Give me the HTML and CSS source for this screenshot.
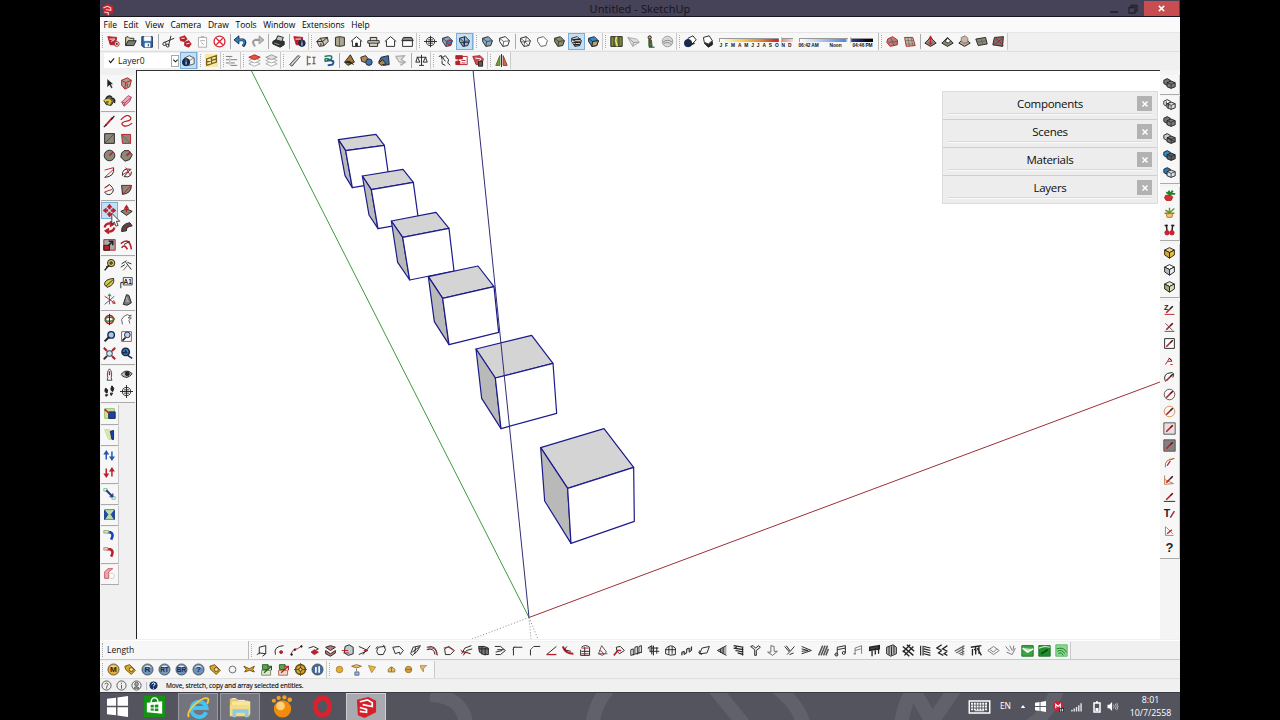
FILE: index.html
```html
<!DOCTYPE html>
<html lang="en">
<head>
<meta charset="utf-8">
<title>Untitled - SketchUp</title>
<link rel="stylesheet" href="styles.css">
</head>
<body>
<div class="screen">
  <header class="titlebar">
    <svg class="app-logo" viewBox="0 0 16 16"><path d="M2 4L9 1L15 4V12L8 15L3 13Z" fill="#c8232c"/><path d="M3 6L8 4L12 6V9L6 8M4 11L9 12V15" fill="none" stroke="#f5c9c9" stroke-width="1.4"/></svg>
    <span class="title">Untitled - SketchUp</span>
    <div class="window-buttons">
      <svg class="min" viewBox="0 0 10 10"><path d="M1 8H9" stroke="#1c1a28" stroke-width="1.4"/></svg>
      <svg class="max" viewBox="0 0 10 10"><path d="M1 3.5H7V9H1ZM3 3V1.5H9V7H7.500" fill="none" stroke="#24212f" stroke-width="1.300"/></svg>
      <span class="close"><svg viewBox="0 0 8 8"><path d="M1 1L7 7M7 1L1 7" stroke="#fff" stroke-width="1.700"/></svg></span>
    </div>
  </header>
  <nav class="menu"><span>File</span><span>Edit</span><span>View</span><span>Camera</span><span>Draw</span><span>Tools</span><span>Window</span><span>Extensions</span><span>Help</span></nav>
  <div class="bar bar-main">
    <div class="strip" data-icons="new open save | cut copy paste erase | undo redo | print | info"></div>
    <div class="strip" data-icons="iso topv front right back left"></div>
    <div class="strip" data-icons="section planeA *planeB"></div>
    <div class="strip" data-icons="xray backedge | wire hidden shaded *textured mono"></div>
    <div class="strip" data-icons="map terrain person earth"></div>
    <div class="strip" data-icons="shadowset shadow">
    </div>
    <div class="sliders">
      <div class="slider months"><i class="track"></i><b class="thumb"></b><div class="ticks"><span>J</span><span>F</span><span>M</span><span>A</span><span>M</span><span>J</span><span>J</span><span>A</span><span>S</span><span>O</span><span>N</span><span>D</span></div></div>
      <div class="slider hours"><i class="track"></i><b class="thumb"></b><div class="ticks"><span>06:42 AM</span><span>Noon</span><span>04:46 PM</span></div></div>
    </div>
    <div class="strip" data-icons="sandA sandB | smoove stamp drape detail flip"></div>
  </div>
  <div class="bar bar-layers">
    <div class="layer-select"><svg viewBox="0 0 8 8"><path d="M1 4L3 6.500L7 1.500" fill="none" stroke="#111" stroke-width="1.200"/></svg><span>Layer0</span><b><svg viewBox="0 0 8 8"><path d="M1.500 3L4 5.500L6.500 3" fill="none" stroke="#222" stroke-width="1.300"/></svg></b></div>
    <div class="strip bare" data-icons="*layerinfo"></div>
    <div class="strip g4" data-icons="fence"></div>
    <div class="strip g3" data-icons="outline"></div>
    <div class="strip" data-icons="stackR stackG"></div>
    <div class="strip" data-icons="beam frame swirl | solidA solidB solidC ghost | scale"></div>
    <div class="strip" data-icons="hook report redcube"></div>
    <div class="strip" data-icons="mirror"></div>
  </div>
  <main class="work">
    <aside class="palette">
      <div class="pair" data-icons="select component paint eraser"></div>
      <div class="pair" data-icons="pencil freehand rect rotrect circle polygon arc arc2 arc3 pie"></div>
      <div class="pair" data-icons="*move pushpull rotate follow scaler offset"></div>
      <div class="pair" data-icons="tape dim protractor text axes text3d"></div>
      <div class="pair" data-icons="orbit pan zoom zoomwin extents prev"></div>
      <div class="pair last" data-icons="position look walk sectionp"></div>
      <div class="single" data-icons="fxA"></div>
      <div class="single" data-icons="fxB"></div>
      <div class="single" data-icons="upB upR"></div>
      <div class="single" data-icons="diag"></div>
      <div class="single" data-icons="twist"></div>
      <div class="single" data-icons="bendB bendR"></div>
      <div class="single" data-icons="fold"></div>
    </aside>
    <section class="canvas">
      <svg class="scene" viewBox="137 71 1023 568">
        <g fill="none" stroke-width="1">
          <path d="M251 70L529 617.500" stroke="#3c9c3c"/>
          <path d="M529 617.500L1160 382" stroke="#9c3038"/>
          <path d="M529 617.500L472 639M529 617.500L538 639M529 617.500L531 639" stroke="#888" stroke-dasharray="1 2"/>
        </g>
        <g id="cubes" transform="translate(320 120) scale(.33333)" stroke="#1b1b8c" stroke-width="3.600" stroke-linejoin="round"></g>
        <path d="M473 70L529 617.500" stroke="#2e2e78" fill="none"/>
      </svg>
      <div class="trays">
        <div class="tray"><span>Components</span><b><svg viewBox="0 0 8 8"><path d="M1.500 1.500L6.500 6.500M6.500 1.500L1.500 6.500" stroke="#fff" stroke-width="1.500"/></svg></b></div>
        <div class="tray"><span>Scenes</span><b><svg viewBox="0 0 8 8"><path d="M1.500 1.500L6.500 6.500M6.500 1.500L1.500 6.500" stroke="#fff" stroke-width="1.500"/></svg></b></div>
        <div class="tray"><span>Materials</span><b><svg viewBox="0 0 8 8"><path d="M1.500 1.500L6.500 6.500M6.500 1.500L1.500 6.500" stroke="#fff" stroke-width="1.500"/></svg></b></div>
        <div class="tray"><span>Layers</span><b><svg viewBox="0 0 8 8"><path d="M1.500 1.500L6.500 6.500M6.500 1.500L1.500 6.500" stroke="#fff" stroke-width="1.500"/></svg></b></div>
      </div>
    </section>
    <aside class="rail">
      <div class="single" data-icons="solid"></div>
      <div class="single" data-icons="solidW solid solidX solidP solidQ"></div>
      <div class="single" data-icons="berry sprout cherry"></div>
      <div class="single" data-icons="cubeY cubeW cubeG"></div>
      <div class="single" data-icons="zpen crosspen boxpen smallpen arcpen circpen circpenO sqpen sqpenG bowpen tripen basepen tpen trioO question"></div>
    </aside>
    <svg class="pointer" viewBox="0 0 12 18"><path d="M1 1V14L4 11.500L6 16.500L8.500 15.500L6.500 10.500H10.500Z" fill="#fff" stroke="#222"/></svg>
  </main>
  <div class="bar bar-length">
    <div class="length">Length</div>
    <div class="strip" data-icons="b1 b2 b3 b4 b5 b6 b7 b8 b9 b10 b11 b12 b13 b14 b15 b16 b17 b18 b19 b20 b21 b22 b23 b24 b25 b26 b27 b28 b29 b30 b31 b32 b33 b34 b35 b36 b37 b38 b39 b40 b41 b42 b43 b44 b45 b46 b47 b48"></div>
  </div>
  <div class="bar bar-render">
    <div class="strip" data-icons="ballM tag ballR ballRT ballBR ballQ tag ring bow export exportR gear ballII"></div>
    <div class="strip wide" data-icons="sphere plane spot dome sphere2 spot2"></div>
  </div>
  <footer class="status">
    <svg viewBox="0 0 12 12"><circle cx="6" cy="6" r="5"/><path d="M4 4.500Q6 2 8 4.500Q6 6 6 9.500"/></svg>
    <svg viewBox="0 0 12 12"><circle cx="6" cy="6" r="5"/><path d="M6 3V4.500M6 5.500V9.500"/></svg>
    <svg viewBox="0 0 12 12"><circle cx="6" cy="6" r="5"/><path d="M4 4.500A2 2 0 1 1 8 4.500A2 2 0 1 1 4 4.500M3 9Q6 5.500 9 9Z" fill="#aaa"/></svg>
    <i></i>
    <svg class="help" viewBox="0 0 12 12"><circle cx="6" cy="6" r="5"/><path d="M4 4.500Q6 1.500 8 4.500Q6 5.500 6 7M6 8.500V9.500"/></svg>
    <span>Move, stretch, copy and array selected entities.</span>
  </footer>
  <div class="taskbar">
    <svg class="wall" viewBox="0 0 1080 28" preserveAspectRatio="none"><g fill="none" stroke="#fff" stroke-opacity=".08" stroke-width="14"><path d="M330 2Q368 4 366 40M508 -4Q494 12 492 36M612 -8L645 34M676 -6Q702 14 705 40M800 40Q803 10 815 -6M812 -6L832 30L856 -6M930 34Q950 20 958 -6"/></g></svg>
    <div class="app"><svg viewBox="0 0 24 24"><path d="M1 4L10.500 2.800V11.300H1ZM12 2.600L23 1V11.300H12ZM1 12.700H10.500V21.200L1 20ZM12 12.700H23V23L12 21.400Z" fill="#fff"/></svg></div>
    <div class="app store"><svg viewBox="0 0 24 24"><path d="M1 1H23V23H1Z" fill="#129312"/><path d="M4 8L20 6.500V19.500L4 18Z" fill="#fff"/><path d="M8.500 8Q8.500 3 12 3T15.500 7" fill="none" stroke="#fff" stroke-width="1.500"/><path d="M8 10.500L11.200 10.200V13H8ZM12.300 10.100L16 9.800V13H12.300ZM8 14H11.200V16.500L8 16.200ZM12.300 14H16V17L12.300 16.600Z" fill="#129312"/></svg></div>
    <div class="app open"><svg viewBox="0 0 24 24"><path d="M20 17A8 8 0 1 1 20.500 12.500H6" fill="none" stroke="#48c2ef" stroke-width="4"/><path d="M2 22Q-1 17 9 8Q19 0 22 3Q23 5 21 8" fill="none" stroke="#f2cb43" stroke-width="2"/></svg></div>
    <div class="app open"><svg viewBox="0 0 26 24"><path d="M1 2H9L11 4H22V21H1Z" fill="#e8c766"/><path d="M3 5H24V20H3Z" fill="#f9e79a"/><path d="M1 9H23V22H1Z" fill="#f4da80"/><path d="M4 23V14H22V23H18V18H8V23Z" fill="#8bcbe8"/><path d="M3 2H8M10 4H18" stroke="#fff"/></svg></div>
    <div class="app"><svg viewBox="0 0 24 24"><circle cx="12" cy="14.500" r="9" fill="#f28c0c"/><circle cx="10" cy="11.500" r="4.500" fill="#ffd27a"/><g fill="#f3a21c"><circle cx="3" cy="6" r="2.200"/><circle cx="8" cy="3" r="2.200"/><circle cx="14" cy="2.500" r="2.200"/><circle cx="19.500" cy="5" r="2.400"/></g></svg></div>
    <div class="app opera"><svg viewBox="0 0 24 24"><ellipse cx="12" cy="12" rx="7.500" ry="9" fill="none" stroke="#d8232e" stroke-width="5"/></svg></div>
    <div class="app open active"><svg viewBox="0 0 24 24"><path d="M2 4L14 1L22 5V17L10 23L3 20Z" fill="#d61f2a"/><path d="M5 6L13 4L18 7V11L8 9M5 12L12 14V17L5 16" fill="none" stroke="#fff" stroke-width="1.800"/></svg></div>
    <div class="tray-area">
      <svg class="kbd" viewBox="0 0 24 15"><path d="M1 1H23V14H1Z" fill="none" stroke="#fff" stroke-width="1.500"/><path d="M3 4H21M3 7H21M3 10H21" stroke="#fff" stroke-width="2" stroke-dasharray="2 1"/><path d="M7 11.500H17" stroke="#fff"/></svg>
      <span class="lang">EN</span>
      <svg class="up" viewBox="0 0 6 4"><path d="M0 4L3 0L6 4Z" fill="#fff"/></svg>
      <svg class="win" viewBox="0 0 12 12"><path d="M0 2L5 1V5.500H0ZM6 1L12 0V5.500H6ZM0 6.500H5V11L0 10ZM6 6.500H12V12L6 11Z" fill="#fff"/></svg>
      <svg class="mega" viewBox="0 0 12 12"><circle cx="5.500" cy="5.500" r="5.500" fill="#d41e34"/><path d="M3 8V3.500L5.500 6L8 3.500V8" fill="none" stroke="#fff" stroke-width="1.200"/><path d="M7 7.500H12V12H7Z" fill="#222"/><path d="M8.500 8.500V11.500M10.500 8.500V11.500" stroke="#fff"/></svg>
      <svg class="net" viewBox="0 0 12 10"><path d="M1 10V8M3.500 10V6.500M6 10V5M8.500 10V3M11 10V1" stroke="#e8e8ee" stroke-width="1.500"/></svg>
      <svg class="bat" viewBox="0 0 8 12"><path d="M1 2H7V11H1ZM3 1H5" fill="none" stroke="#fff" stroke-width="1.500"/><path d="M2.500 7H5.500V10H2.500Z" fill="#fff"/></svg>
      <svg class="vol" viewBox="0 0 12 12"><path d="M0 4H2L5 1V11L2 8H0Z" fill="#fff"/><path d="M6.500 4Q8 6 6.500 8M8.500 3Q10.500 6 8.500 9M10.200 2Q12.500 6 10.200 10" fill="none" stroke="#ddd" stroke-width=".8"/></svg>
      <div class="clock"><span>8:01</span><span>10/7/2558</span></div>
    </div>
  </div>
</div>
<script src="app.js"></script>
</body>
</html>
```

FILE: styles.css
```css
body { margin: 0; background: #000; font-family: "Open Sans", "Noto Sans", sans-serif; color: #161616; overflow: hidden; }
svg { display: block; }
.screen { width: 1080px; height: 720px; margin: 0 auto; background: #f0f0f0; display: flex; flex-direction: column; overflow: hidden; }

.titlebar { height: 17px; background: #464257; border-bottom: 1px solid #17151f; box-sizing: border-box; display: grid; grid-template-columns: 80px 1fr 80px; align-items: center; flex: none; }
.app-logo { width: 13px; height: 13px; margin-left: 1px; }
.title { text-align: center; font-size: 11px; line-height: 18px; color: #15131d; letter-spacing: .1px; }
.window-buttons { display: flex; align-items: center; justify-content: flex-end; height: 16px; }
.min, .max { width: 10px; height: 10px; margin-right: 10px; }
.min { margin-right: 9px; }
.max { margin-right: 6px; }
.close { width: 35px; height: 15px; align-self: flex-start; background: #c74d50; display: grid; place-items: center; margin-right: 1px; }
.close svg { width: 7px; height: 7px; }

.menu { height: 15px; background: #fafafa; display: flex; gap: 6.600px; padding-left: 3.500px; font-size: 8.500px; line-height: 15px; flex: none; }
.menu span { white-space: nowrap; color: #000; }

.bar { display: flex; align-items: center; flex: none; }
.bar-main { height: 19px; box-shadow: inset 0 1px #e6e6e6; }
.bar-layers { height: 19px; box-shadow: inset 0 1px #dedede; }
.strip { display: flex; height: 17px; background: #f7f7f7; padding-left: 5px; border-right: 1px solid #c9c9c9; position: relative; }
.strip::before, .length::before { content: ""; position: absolute; left: 2px; top: 2px; bottom: 2px; border-left: 1px dotted #aaa; }
.strip:first-child { padding-left: 4.500px; }
.strip.bare { padding-left: 0; }
.strip.bare::before { display: none; }
.strip.g4 { padding-left: 5px; }
.strip.g3 { padding-left: 2px; }
.cell { width: 17px; height: 17px; display: grid; place-items: center; box-sizing: border-box; flex: none; }
.cell svg { width: 13px; height: 13px; }
.cell.on { background: #c5dff5; outline: 1px solid #79aeda; outline-offset: -1px; }
.gap { width: 1px; margin: 1px 1px 1px 2px; background: #aaa; flex: none; }

.sliders { height: 17px; background: #f7f7f7; display: flex; gap: 6px; padding: 0 5px 0 3px; border-right: 1px solid #bbb; }
.bar-main .strip:nth-child(6) { border-right: 0; }
.slider { width: 74px; position: relative; padding-top: 5px; }
.track { display: block; height: 3px; border: 1px solid #999; border-right: 0; border-bottom: 0; }
.months .track { background: linear-gradient(90deg, #fff 0, #f3d55c 28%, #e08b36 55%, #cf2328 78%, #d98 86%, #f2dada 100%); }
.hours .track { background: linear-gradient(90deg, #fff 0, #5686d4 62%, #fff 66%, #223a92 72%, #080812 92%); }
.thumb { position: absolute; top: 4px; width: 2px; height: 6px; background: #fff; border-right: 1px solid #bbb; }
.months .thumb { left: 60px; }
.hours .thumb { left: 49px; }
.ticks { display: flex; justify-content: space-between; font: bold 4.800px/6px "Liberation Sans", sans-serif; padding: 1px 1px 0; color: #111; }
.hours .ticks { letter-spacing: -.1px; padding: 1px 0 0; }

.layer-select { width: 75px; height: 15px; margin: 0 1px 0 4px; background: #fff; display: flex; align-items: center; font-size: 8.500px; }
.layer-select svg { width: 7px; height: 7px; margin: 0 3px 0 4px; }
.layer-select b { width: 8px; height: 12px; border: 1px solid #aaa; box-sizing: border-box; margin-left: auto; display: grid; place-items: center; }
.layer-select b svg { width: 7px; margin: 0; }

.work { height: 569px; display: flex; position: relative; flex: none; }
.palette { width: 36px; padding-top: 5px; box-sizing: border-box; background: #f0f0f0; }
.pair { display: grid; grid-template-columns: 17px 17px; width: 34px; margin-left: .5px; background: #f7f7f7; padding-bottom: 2px; border-bottom: 1px solid #aaa; margin-bottom: 1px; }
.pair.last { margin-bottom: 2px; }
.pair:nth-child(4) { margin-bottom: 0; }
.single { width: 17px; margin-left: .5px; background: #f7f7f7; padding-bottom: 2px; border-bottom: 1px solid #aaa; border-right: 1px solid #c6c6c6; margin-bottom: 1px; }
.canvas { width: 1023px; background: #fff; border-left: 1px solid #222; border-top: 1px solid #333; position: relative; height: 568px; }
.scene { width: 1023px; height: 568px; }
.trays { position: absolute; top: 20px; right: 2px; width: 214px; border: 1px solid #dcdcdc; background: #ededed; }
.tray { height: 28px; box-sizing: border-box; position: relative; border-bottom: 1px solid #cfcfcf; text-align: center; font-size: 11.500px; letter-spacing: -.3px; line-height: 23px; color: #0c0c0c; }
.tray:last-child { border-bottom: 0; height: 27px; }
.tray::after { content: ""; position: absolute; left: 5px; right: 5px; bottom: 4px; height: 1px; background: #d9d9d9; border-bottom: 1px solid #fafafa; }
.tray b { position: absolute; right: 5px; top: 4px; width: 15px; height: 15px; background: #b2b2b2; display: grid; place-items: center; }
.tray b svg { width: 8px; height: 8px; }
.rail { width: 20px; background: #f4f4f4; padding-top: 4.500px; box-sizing: border-box; }
.rail .single { width: 18px; padding-bottom: 2px; margin-bottom: 3px; margin-left: 0; padding-left: 1px; }
.rail .single:first-child { margin-bottom: 1px; }
.pointer { position: absolute; left: 11px; top: 142px; width: 10px; height: 16px; }

.bar-length { height: 20px; margin-top: 1px; border-bottom: 1px solid #c8c8c8; border-top: 1px solid #fff; box-sizing: border-box; }
.length { width: 141px; height: 18px; padding-left: 7px; font-size: 8.500px; line-height: 18px; position: relative; border-right: 1px solid #bbb; background: #f7f7f7; }
.bar-length .strip { padding-left: 4.500px; }
.bar-render { height: 18px; }
.bar-render .strip:first-child { padding-left: 5px; }
.strip.wide { padding-left: 4px; padding-right: 2px; }
.strip.wide .cell:nth-child(3) { margin-right: 2px; margin-left: -1px; }
.strip.wide .cell:last-child { margin-left: -2px; }

.status { height: 14px; display: flex; align-items: center; padding-left: 1px; gap: 4px; font-size: 6.600px; letter-spacing: -.14px; border-top: 1px solid #ddd; box-sizing: border-box; flex: none; white-space: nowrap; }
.status svg { width: 11px; height: 11px; fill: none; stroke: #555; stroke-width: 1; }
.status i { width: 1px; height: 8px; background: #bbb; margin-right: -3px; }
.status .help { fill: #173466; stroke: #fff; }
.status span { margin-left: 3px; color: #000; -webkit-text-stroke: .1px #000; }

.taskbar { height: 28px; background: #54545f; display: flex; position: relative; border-top: 1px solid #3c3c46; box-sizing: border-box; flex: none; gap: 2px; }
.wall { position: absolute; left: 0; top: 0; width: 1080px; height: 27px; }
.app { width: 40px; height: 27px; box-sizing: border-box; display: grid; place-items: center; position: relative; flex: none; }
.app:nth-of-type(1) { width: 34px; }
.app.store, .app.opera { padding-right: 3px; }
.app svg { width: 23px; height: 23px; }
.app.open { border: 1px solid #9a9aa4; background: #73747e; border-bottom: 0; }
.app.active { background: #a9a9b0; border-color: #cfcfd6; }
.tray-area { margin-left: auto; display: flex; align-items: center; position: relative; color: #fff; padding-right: 8px; }
.kbd { width: 23px; height: 14px; margin-right: 9px; }
.lang { font-size: 8.500px; margin-right: 9px; margin-top: -2px; }
.up { width: 6px; height: 3px; margin-right: 9px; }
.win { width: 11px; height: 11px; margin-right: 7px; }
.mega { width: 11px; height: 11px; margin-right: 7px; }
.net { width: 11px; height: 10px; margin-right: 11px; }
.bat { width: 8px; height: 12px; margin-right: 6px; }
.vol { width: 12px; height: 11px; margin-right: 10px; }
.clock { display: flex; flex-direction: column; align-items: center; font-size: 8.800px; line-height: 13px; width: 43px; white-space: nowrap; }
```

FILE: app.js
```js
const K = '#222', R = '#b5202a', G = '#8b8878', B = '#2a7fb8', N = '#172a50', W = '#fff', Y = '#d8a826';

// Shape helpers draw on a 16 x 16 grid: geometry, stroke, fill, stroke width.
const p = (d, s = K, f = 'none', w = 1.15) => `<path d="${d}" stroke="${s}" fill="${f}" stroke-width="${w}"/>`;
const c = (x, y, r, s = K, f = 'none', w = 1.15) => `<circle cx="${x}" cy="${y}" r="${r}" stroke="${s}" fill="${f}" stroke-width="${w}"/>`;
const t = (x, y, size, s, f = K) => `<text x="${x}" y="${y}" font-size="${size}" font-weight="bold" font-family="Liberation Sans" text-anchor="middle" fill="${f}">${s}</text>`;

const tilt = (f, s = K) => p('M2 4L9 2L14 7L12 13L6 14L2 8Z', s, f) + p('M2 4L7 8L14 7M7 8L6 14', s, 'none', .8);
const cube = (a, b, d, s = K) => p('M2 5L8 2L14 5L8 8Z', s, a) + p('M2 5L8 8V15L2 11Z', s, b) + p('M14 5L8 8V15L14 11Z', s, d);
const pair = (a, b, s = K) => p('M1 4L5 2L9 4V9L4 10L1 8Z', s, a) + p('M5 7L10 5L15 7V12L10 14L5 12Z', s, b) + p('M5 7L10 9L15 7M10 9V14', s, 'none', .9);
const house = f => p('M1 8L8 2L15 8M3 7V14H13V7', K, f) + p('M7 14V10H9V14', K, K);
const pen = (col = R) => p('M4 12L12 4', col, 'none', 2) + p('M9 7L12 4', K, 'none', 1.300);
const hatch = 'M2 14L7 2M5 14L10 2M8 14L13 2M11 14L14 6';
const ball = (col, dark, s, tc) => c(8, 8, 6.800, '#444', col, 1) + p('M3 6Q8 0 13 6Q8 4 3 6Z', 'none', dark) + t(8, 11.300, s.length > 1 ? 8 : 10, s, tc);
const mound = 'M1 10L8 3L15 10L8 14Z';

const icons = {
  new: p('M1 2L12 3L10 12H4Z', R, R) + p('M3 5H10M5 8L9 6', W) + c(12, 11, 3, R, W) + p('M10.500 11H13.500M12 9.500V12.500'),
  open: p('M2 13V3L5 2L7 4H12V7', K, '#d9d4b0') + p('M2 13L5 7H15L12 13Z', K, '#777b70'),
  save: p('M1 2H14V15H3L1 13Z', N, '#286db0') + p('M4 2H12V7H4ZM5 15V10H11V15', W, W, .8) + p('M9 11V14', N),
  cut: p('M3 9L15 4M11 1L8 13', K) + c(3, 11, 2) + c(7, 13, 1.800),
  copy: p('M1 3L7 1L10 5L7 8L2 7Z', R, R) + p('M7 9L12 7L15 11L12 15L7 13Z', R, R) + p('M3 4L7 4M9 11L13 10', W),
  paste: p('M3 3H13V15H3ZM6 2H10M5 7H11M6 9L10 12', '#aaa', W),
  erase: c(8, 8, 6.700, '#d72533', W, 1.600) + p('M4 4L12 12M12 4L4 12', '#d72533', 'none', 1.600),
  undo: p('M4 6H11Q16 8 11 14', N, 'none', 3.500) + p('M0 6L6 1V11Z', N, B) + p('M4 6H11Q15 8 11 13', B, 'none', 2),
  redo: p('M12 6H5Q0 8 5 14', '#999', 'none', 2.500) + p('M16 6L10 1V11Z', '#999', '#bbb'),
  print: p('M1 8L6 5L15 8V12L10 15L1 11Z', K, '#333') + p('M5 6L7 1L14 3L12 8Z', K, '#b9c8cc') + p('M3 10L9 12', '#999'),
  info: p('M1 2L12 3L10 12H4Z', R, R) + p('M3 5H10', W) + c(11, 10, 4, N, N) + p('M11 9V13M11 7V8', W),
  iso: p('M1 8L5 4L14 3L15 8L10 13L4 14Z', K, '#ccc8b5') + p('M1 8L8 8L14 3M8 8L10 13M5 4L8 8M6 10V13', K),
  topv: p('M3 3L8 2L14 3V13L8 14L3 13Z', K, '#aaa68f') + p('M8 2V14', '#555', 'none', 1),
  front: house(W), right: p('M1 7H15V10H1ZM4 7V3H12V7M3 10V14H13V10', K, '#d9d6c6'), back: p('M1 8L8 2L15 8M3 7V14H13V7', K, W), left: p('M1 7L3 3H13L15 7Z', K, '#888') + p('M2 7H14V14H2Z', K, W),
  section: c(8, 8, 5, K, W) + p('M0 8H16M8 1V15') + p('M5 6H11M5 10H11', K),
  planeA: tilt('#87a9c7') + c(10, 9, 3, R, B), planeB: tilt('#9bb5c9') + p('M8 2V14M3 9H14', N),
  xray: tilt('#88a9bf'), backedge: tilt(W), wire: tilt(W) + p('M9 2L8 9L12 13M8 9L2 8', K, 'none', .8), hidden: p('M2 4L9 2L14 7L12 13L6 14L2 8Z', '#444', W, 1),
  shaded: tilt('#898d6c'), textured: tilt(W) + p('M3 6L13 5M4 9L13 9M5 12L12 12', K, 'none', 2), mono: tilt('#3688c6') + p('M7 8L14 7L12 13L6 14Z', K, '#bba46d'),
  map: p('M1 2H15V14H1Z', K, '#7b8b38') + p('M5 2V14M11 2V14', '#333') + p('M8 2L7 7L9 14', '#eee06c', 'none', 2), terrain: p('M1 3L12 5L15 9L7 14Z', '#aaa', '#e0e0e0') + p('M1 3L8 9L7 14M8 9L15 9', '#999'),
  person: c(7, 3, 2, K, '#d59d62') + p('M6 5L9 6L10 14H6Z', '#275f34', '#387b3a') + p('M7 6V11', R, 'none', 2) + p('M6 15H13', K), earth: c(8, 8, 6.500, '#999', '#d8d8d8') + p('M2 9Q8 4 14 9M3 11Q8 7 13 12', '#888'),
  shadowset: p('M5 4L11 1L15 6L10 11L5 9Z', K, W) + c(5, 10, 4.500, N, N) + p('M6 13L13 10', K, K, 2), shadow: p('M3 3L10 1L14 7L9 11L4 9Z', K, W) + p('M4 10L9 15L14 12V8L9 12Z', K, K),
  sandA: p('M2 5L8 2L14 6V12L5 14L1 9Z', R, '#b97f76') + p('M3 9L14 8M6 4L10 13', '#544', 'none', .8), sandB: p('M2 3H12L15 13L4 14Z', R, '#c9b7a5') + p('M3 7H13M4 11H14M6 3L8 14M10 3L12 13', '#65624d', 'none', .8),
  smoove: p(mound, K, G) + p('M8 2V11M6 5L8 1L10 5M6 9L8 12L10 9', R), stamp: p(mound, K, G) + p('M5 8L8 4L12 7L9 10Z', K, W), drape: p(mound, K, '#b3a591') + p('M4 3L9 1L12 4V9L7 10L4 7Z', '#8c7467', '#c9b8ab'),
  detail: p('M1 5L13 3L15 11L4 13Z', K, G) + p('M2 9L13 7M7 4L10 12', '#555', 'none', .7), flip: p('M3 3L14 2L13 14L1 12Z', K, '#71706a') + p('M2 13L14 3M4 3L14 13', R),
  layerinfo: p('M3 5L9 2L15 5V12L9 14L3 11Z', '#555', '#edf3f7') + p('M3 5L9 8L15 5M9 8V14', '#888') + c(5, 10, 4.500, N, N) + p('M5 9V13M5 7V8', W),
  fence: p('M0 0H16V16H0Z', 'none', '#f8e9a4') + p('M2 14V6L14 2V10L2 14M8 4V12M2 10L14 6', '#77601c', 'none', 1.500), outline: p('M1 3H9M1 7H5M7 7H15M1 11H5M7 11H12M7 14H15', '#777') + p('M6 4V14', '#aaa'),
  stackR: p('M1 12L8 9L15 12L8 15Z', '#aaa', W) + p('M1 8L8 5L15 8L8 11Z', '#aaa', W) + p('M1 4L8 1L15 4L8 7Z', R, '#dd5b35'), stackG: p('M1 12L8 9L15 12L8 15Z', '#aaa', W) + p('M1 8L8 5L15 8L8 11Z', '#aaa', W) + p('M1 4L8 1L15 4L8 7Z', '#999', '#ddd'),
  beam: p('M2 13L12 2L15 3L5 15Z', '#555', '#aaa') + p('M4 13L14 3', '#eee'), frame: p('M3 2V14M4 4H7M4 12H7', '#876b48', 'none', 1.600) + p('M9 4H13M9 12H13M11 4V12', '#444'), swirl: p('M3 3Q15 0 11 7L4 9Q2 2 14 9', '#2d8060', 'none', 2) + p('M6 8Q17 7 13 13L7 14', '#235594', 'none', 2.400),
  solidA: p('M2 10L9 1L14 10L6 14Z', K, '#a77937') + p('M2 10L8 9L13 13', K, K), solidB: p('M1 4L7 2L10 6L8 11L2 9Z', K, '#b78a49') + c(11, 10, 4, N, '#3d73a8'), solidC: p('M5 4L14 2L15 13L8 14L2 10Z', K, '#3c71a7') + p('M2 11L7 7L11 12L5 14Z', K, '#b58544'), ghost: p('M2 3L13 2L9 7L14 10L8 14M2 3L6 9L12 11', '#aaa', '#ddd', 1.500),
  scale: p('M8 1V14M2 4H14M5 14H11M3 4L1 10H6L3 4M13 4L10 10H15Z'), hook: p('M1 3L4 2L5 7M4 2L9 9M6 4L9 2L13 7L12 11L15 14M5 8V12L9 14'), report: p('M4 3H15V13H4Z', R, W) + p('M1 2H9V6H1ZM1 9H6V13H1Z', R, R) + p('M8 8H13M8 11H13', R), redcube: p('M1 3L10 2L14 6L12 13H5Z', R, '#c94b53') + p('M4 5L11 6L8 10', W) + p('M8 9H13V15H8Z', K, '#465'),
  mirror: p('M1 14L6 2V14Z', '#50702a', '#7b9b37') + p('M15 14L10 2V14Z', '#933', '#d06d4a') + p('M8 0V16'),

  select: p('M5 2V13L8 10L10 14L12 13L10 9H13Z', W, K, .6), component: p('M2 4L9 1L14 4L12 12L6 15L2 10Z', R, '#a9a090') + p('M2 4L7 7L14 4M7 7L6 14M9 8V12', R), paint: p('M1 8L8 4L14 8L10 14L4 13Z', K, '#736f45') + p('M3 7Q6 0 11 4M10 5Q16 5 14 11', K, 'none', 1.800) + p('M2 9Q6 5 9 9L7 13', '#e4ce35', 'none', 2.500), eraser: p('M2 10L10 2L14 4L12 9L5 15Z', '#a94761', '#f0a6b8') + p('M2 10L6 11L14 4M6 11L5 15', '#a94761'),
  pencil: p('M3 13L12 3', R, 'none', 2.200) + p('M10 6L14 1M1 15L4 12', K, 'none', 1.500), freehand: p('M1 6Q9 -3 13 3Q15 7 6 8Q0 10 4 13Q9 15 15 10', R, 'none', 1.500), rect: p('M2 2H14V14H2Z', K, G) + p('M2 14L14 2', R), rotrect: p('M2 3H13V14H3Z', R, G) + p('M2 3L13 14', R, 'none', .7),
  circle: c(8, 8, 6.500, K, G) + p('M8 8L12 4', R, 'none', 2), polygon: p('M5 2H11L15 7L12 13L6 15L1 10L2 5Z', K, G) + p('M8 8L13 4', R, 'none', 2), arc: p('M13 2Q15 13 2 14', K) + p('M2 5L13 2M2 14L13 4', R), arc2: p('M3 12Q2 2 13 4L5 13Q14 15 14 7', K) + p('M3 11L14 4M7 2L13 12', R),
  arc3: p('M2 6L8 2Q17 9 9 14Q4 15 2 11', K) + p('M2 11L11 8M8 2L2 6', R), pie: p('M2 3H14Q14 13 3 14Z', K, G) + p('M2 3H14L3 14', R),
  move: p('M8 0L5 4H7V6H9V4H11ZM8 16L5 12H7V10H9V12H11ZM0 8L4 5V7H6V9H4V11ZM16 8L12 5V7H10V9H12V11Z', '#8e1720', '#c61f2b', .6), pushpull: p('M1 9L8 6L15 9L8 14Z', K, G) + p('M8 10V4M6 5L8 2L10 5Z', R, R, 1.400), rotate: p('M2 8Q3 3 9 3M14 8Q13 13 7 13', R, 'none', 2.800) + p('M9 0L14 4L9 7ZM7 16L2 12L7 9Z', R, R), follow: p('M2 13Q1 4 12 2L15 6Q7 7 8 12Z', K, '#504a43') + p('M4 12Q4 7 12 4', R),
  scaler: p('M1 2H15V15H1Z', R, '#aaa') + p('M4 12L12 4M7 4H12V9', K, 'none', 2) + p('M1 9H8V15H1Z', K, R), offset: p('M1 7Q12 -2 14 14M2 12Q6 7 9 14', R, 'none', 2) + p('M5 8L12 4', K),
  tape: c(10, 5, 4.500, K, '#d5c94a') + p('M7 8L2 14M8 8L4 10', K, 'none', 1.800) + c(10, 5, 1.500, K, G), dim: p('M2 6L8 2M1 10L6 7M7 4L14 13M9 4L14 6') + p('M4 14L9 8', '#666'), protractor: p('M2 11Q1 4 13 3Q15 11 5 14Z', K, '#d5cd4a') + p('M4 12L12 5'), text: p('M4 2H15V11H4Z', K, W, 1) + t(9.500, 9.500, 8, 'A1') + p('M4 8H1V15'), axes: p('M8 2V14M6 4L8 1L10 4', '#258a40') + p('M2 4L14 12M11 12L15 13L13 9', R) + p('M2 14L14 4', '#28609a'), text3d: p('M4 14L8 2L11 3L14 12L9 15Z', K, '#777') + p('M7 10H11M8 5L9 9', '#ccc'),
  orbit: c(8, 8, 5, R, 'none', 2) + p('M2 7Q8 3 14 7Q12 12 2 9', '#328138', 'none', 1.600) + p('M8 1V15', K), pan: p('M3 14L2 8L5 4L7 3L9 2L11 3H14L10 6H14L11 9L12 13', '#444', W, 1), zoom: p('M2 14L8 8', K, 'none', 2.500) + c(10, 6, 4, N, '#a9cadc', 1.700), zoomwin: p('M2 2H14V14H2Z', R, W, 1) + p('M3 13L7 9', K, 'none', 2) + c(9, 6, 3.500, N, '#b8d4e3'),
  extents: p('M1 1L5 5M15 1L11 5M1 15L5 11M15 15L11 11', R, 'none', 2.600) + c(8, 8, 3.500, N, '#d7e5ef') + p('M5 11L1 15', K), prev: c(7, 6, 4.500, N, '#4684b4', 2) + p('M9 10L15 14M3 7H8L6 4', N, 'none', 2),
  position: p('M6 12Q4 5 8 1Q12 5 10 12L11 15H5Z', K, W, 1) + p('M8 4V9', R, 'none', 1.800), look: p('M1 8Q8 0 15 7Q9 15 2 9', K, '#bbb') + c(9, 7, 2.500, K, K), walk: p('M3 4Q7 5 5 10Q1 9 3 4ZM3 12L6 12L4 14ZM11 1Q15 4 12 8Q8 7 11 1ZM9 10L12 10L10 13Z', K, K), sectionp: c(8, 8, 5, K, W) + p('M0 8H16M8 0V16M5 6H11M5 10H11'),
  fxA: p('M2 2H14V14H2Z', '#9abd75', '#c8e68f') + p('M7 6H15V14H7Z', N, '#1d42af') + p('M2 3L8 8', R, 'none', 2), fxB: p('M2 2H8L10 14H7Z', '#cad89b', '#dbe9ab') + p('M9 4L13 3V14H11Z', N, '#1b42b4'), upB: p('M4 13V6M2 6L4 3L6 6ZM11 3V10M9 10L11 13L13 10Z', '#2353b2', '#244fc0', 1.800), upR: p('M4 3V10M2 10L4 13L6 10ZM11 13V6M9 6L11 3L13 6Z', R, R, 1.800),
  diag: p('M1 2H5V5H1ZM11 12H15V15H11Z', '#7b9', W) + p('M4 4L12 12', '#233d86', 'none', 2.500) + p('M8 12H12V8', '#233d86', 'none', 1.500), twist: p('M2 2H14V14H2Z', '#55924b', '#bddf9e') + p('M2 3L6 8L2 14ZM14 3L10 8L14 14Z', '#1d3ea0', '#2449bc'), bendB: p('M5 4H9Q14 6 10 13', '#1b42b4', 'none', 3.200) + p('M1 2H7V5H1Z', '#87ac77', '#ddecc8'), bendR: p('M4 4H9Q14 6 10 13', R, 'none', 3.200) + p('M1 2H6V5H1Z', '#b88', '#eed8c8'), fold: p('M2 14V6L6 2H12L7 6V14Z', '#c45f67', '#e9a7a8') + p('M9 8Q16 7 13 14H9', '#ccc', W),

  solid: pair('#6f746e', '#777d76'), solidW: pair(W, '#ddd') + p('M7 6V12M4 4V9'), solidX: pair('#ccc', '#777') + p('M5 7L15 12'), solidP: pair('#2d88c8', '#555f63'), solidQ: pair('#2779b7', '#d8e6ef'),
  berry: p('M3 8L9 7L12 10L10 14H4L2 11Z', R, '#d33132') + p('M8 8L12 2M8 6H15M4 4L9 7M7 2L9 7', '#247d28', 'none', 2.300), sprout: p('M4 10Q9 7 12 10L11 14H5Z', '#bd7e2c', '#efc078') + p('M8 9V2M3 5L8 8L14 3M2 9H14', '#6b9332', 'none', 1.800), cherry: p('M5 10L4 2M11 10L12 2M2 3H6M10 3H14', K, 'none', 1.800) + c(5, 12, 2.700, R, '#d51f35') + c(11, 12, 2.700, R, '#d51f35'),
  cubeY: cube('#f2d873', '#d8a934', '#eabb3a'), cubeW: cube(W, '#b6bbc2', '#e8eaed'), cubeG: cube('#e5edca', '#a1ad79', '#d5dfbd'),
  zpen: t(4, 8, 9, 'Z') + pen() + p('M2 14H14', R), crosspen: pen() + p('M3 4L12 13M2 14H14', '#555'), boxpen: p('M2 2H14V14H2Z', K, W) + pen(), smallpen: p('M3 13L8 5L11 9L6 9M9 13H12', R) + p('M7 5L11 8', K), arcpen: p('M3 13Q-1 3 10 2Q15 2 12 8', K) + pen(), circpen: c(8, 8, 6.500, '#555') + pen(), circpenO: c(8, 8, 6.500, '#d2904f') + pen(), sqpen: p('M1 1H15V15H1Z', '#555', '#e8dede') + pen(), sqpenG: p('M1 1H15V15H1Z', '#555', '#8a7f7f') + pen(), bowpen: p('M3 14Q1 4 14 3L8 5', '#b66b32') + p('M5 12L9 6', R, 'none', 1.600), tripen: p('M2 3V14L13 13L2 8', '#c4783c') + pen(), basepen: pen() + p('M1 14H15'), tpen: t(5, 12, 13, 'T') + p('M9 13L14 5', R, 'none', 1.800), trioO: p('M3 3V14H13', '#c4783c') + p('M4 4L12 12', '#c4783c') + p('M5 12L11 7', R, 'none', 1.500), question: t(8, 14, 16, '?'),

  b1: p('M4 4L12 2V12L4 11ZM1 13L5 11M12 12L8 15', K), b2: p('M3 13Q0 3 13 2') + c(10, 10, 1.800, R, R), b3: p('M1 13Q4 5 9 6L15 2', R) + c(2, 13, 1, K, K) + c(6, 7, 1, K, K) + c(14, 3, 1, K, K), b4: p('M2 5L8 3L14 6L10 8') + p('M5 10L9 7L14 10L9 13Z', R, R), b5: p('M2 4L8 2L14 4L8 8ZM2 8L8 12L14 8V11L8 15L2 12Z', K, '#ca777a'), b6: p('M5 3L10 1L15 4V12L9 14L4 11Z', K, '#becbd0') + p('M1 8H9M3 11H10', R),
  b7: p('M1 3L12 8L1 13M6 13L15 2') + p('M7 8H12', R), b8: p('M4 4L11 3L13 7L10 13H4L2 9ZM3 3L1 6M13 4L10 1'), b9: p('M1 4L9 3L14 8L10 13L9 10L4 12Z'), b10: p('M2 12L5 4L14 2L10 9L4 14L2 12M4 10L12 4M8 4L7 12'), b11: p('M1 4Q13 0 14 14M1 7Q10 4 11 13') + p('M2 5Q13 3 13 13', R), b12: p('M2 6L7 3L14 8L9 13H3Z') + p('M1 5Q8 2 12 8', R),
  b13: p('M2 12L6 5L14 2M4 14L8 8L15 6M3 9L13 12') + p('M1 7Q3 13 10 10', R), b14: p('M2 3H9L14 5V13H8L3 10ZM6 3V13M2 6H14M10 5V14', K, '#777'), b15: p('M1 3H8L14 8L8 13H2M4 7H12M2 10L10 8'), b16: p('M3 14V4H14') + p('M2 7L5 3', R), b17: p('M3 14V7M7 3H15') + p('M3 7L7 3', R), b18: p('M2 13L14 3') + p('M2 13H14', R, 'none', 1.600), b19: p('M1 3Q4 12 14 12', R, 'none', 2.500) + p('M6 3L3 7L11 9'),
  b20: p('M3 4Q8 0 13 4V14H2V7M7 4V14M3 9H13') + p('M3 5H12M3 12H12', R), b21: p('M3 12L7 2L13 10L8 14ZM3 12H14', '#555') + p('M4 8Q9 9 9 13', R), b22: p('M4 4L9 3L14 8L8 12L5 9Z') + p('M1 14L6 8H10', R, 'none', 2),
  b23: p('M1 14V7L4 6V14M6 12V4L9 3V13M11 12V3L14 2V11M1 14L14 10'), b24: p('M1 5L6 2V13M5 5H14M3 9H15M8 2V14M12 4V12', K, '#999'), b25: p('M2 12V6Q8 -1 14 5V13Q8 15 2 12M6 3V12M10 3V12M2 7H14', K), b26: p('M1 14V10L4 9V13L7 11V6L10 5V10L13 8V3', K, '#aaa'), b27: p('M2 12L5 5L14 3L11 11ZM2 8L1 11L5 13'), b28: p('M14 2L3 8L14 14M10 4V12M7 6V11', K, '#aaa'), b29: p('M2 2L14 4M2 5L14 7M5 8L14 10M7 11L14 13M5 3V9M13 3V14', K, 'none', 1.500), b30: p('M7 14V7L2 3L5 2L8 5L12 2L14 4L9 8V14Z', K, '#eee'),
  b31: p('M6 2L10 3V9H14L8 14L2 10H6Z', '#666'), b32: p('M2 3L8 10L5 13M4 2L9 9L14 3M8 13L13 11', K), b33: p('M2 3L14 8L2 12M2 6L10 8L2 9'), b34: p(hatch, '#555', 'none', 1.800), b35: p('M4 13V4L14 2V11M4 7L14 5') + c(3, 13, 1.800, K, '#aaa') + c(12, 11, 1.800), b36: p('M5 13V5L13 2V12M5 8L12 6M3 12H6', '#777'), b37: p('M2 4L14 2V6L2 8ZM5 6V15M9 5V13M13 3V12', K, '#444', 1.600), b38: p('M2 4L10 1L14 4V12L7 15L2 12ZM5 3V13M8 3V14M11 2V12', K, '#bbb'),
  b39: p('M1 3L14 14M1 8L9 15M6 1L15 9M3 14L14 3M1 10L10 1', K, 'none', 1.700), b40: p('M2 2V14M5 2V14M6 3L14 5M6 6L14 8M6 9L14 11M6 12L14 14', K, 'none', 1.400), b41: p('M7 1L1 5L7 8M14 2L8 6L14 9M7 8L3 11L9 14M14 9L10 12L14 14', K, 'none', 1.500), b42: p('M2 9L14 2M4 11L14 5M7 12L14 9M9 13L14 12M12 4V14', '#666', 'none', 1.500), b43: p('M1 4L14 2M3 6V14M7 4V13M11 3V12M5 6L8 9M9 5L14 14', K, 'none', 1.600), b44: p('M1 8L8 3L15 8L8 13ZM4 7L8 10L12 6', '#777'), b45: p('M2 3L7 9M7 2L10 8M12 2L11 8M3 10L10 13L14 5', '#777'),
  b46: p('M1 2H15V15H1Z', '#187322', '#3fa447') + p('M2 5L8 10L15 6', W, '#bce7b8', 2), b47: p('M1 2H15V15H1Z', '#187322', '#238d2c') + p('M1 5L8 3L15 4', '#bfe6bf', 'none', 1.500) + p('M4 12L12 7', '#0b481a', 'none', 2), b48: p('M1 1H15V15H1Z', '#58b765', '#8bd990') + p('M2 6Q11 3 14 10M3 9Q9 6 12 12M4 12Q8 9 10 14', '#177b27'),

  ballM: ball('#e4af35', '#f7dc87', 'M', '#40260a'), ballR: ball('#7495bb', '#e4edf6', 'R', N), ballRT: ball('#7898bc', '#e4edf6', 'RT', N), ballBR: ball('#6e93bd', '#e4edf6', 'BR', N), ballQ: ball('#6d93bd', '#d7e6f2', '?', N), ballII: c(8, 8, 6.800, '#444', '#426da2', 1) + p('M6 5V12M10 4V12', W, 'none', 2), tag: p('M1 4L7 2L14 9L9 14L2 8Z', '#755317', Y) + c(9, 8, 2.500, '#634915', '#f5df9b'),
  ring: c(8, 8, 4.200, '#555', '#f4f4f4', 1), bow: p('M1 4L8 7L14 4L12 8L14 11L8 9L2 11L4 8Z', '#735013', Y), export: p('M2 9H13V15H2Z', '#7b8a62', '#dfe6d0') + p('M3 2H10V8H3Z', '#27662a', '#60a34a') + p('M5 12L13 5M9 4L14 4V9', '#245a2c', 'none', 1.500), exportR: p('M2 9H13V15H2Z', '#b1664f', '#eed8cc') + p('M3 2H10V8H3Z', '#27662a', '#60a34a') + p('M5 12L13 5M9 4L14 4V9', R, 'none', 1.500), gear: c(8, 8, 6, '#6d4e19', Y, 2) + p('M8 0V16M0 8H16', '#654812', 'none', 1) + c(8, 8, 2, K, '#f5dc8d'),
  sphere: c(8, 8, 4, '#9e7928', '#e7ac2c', 1), sphere2: c(8, 8, 4, '#8f7025', '#d5a33c', 1) + p('M4 8H12', '#8f7025'), plane: p('M2 4L8 2L14 4L8 6Z', '#8c6b27', '#e7c870') + p('M8 7V10', '#777') + p('M6 11H11V15H6Z', '#576c8d', '#9cb4d1'), spot: p('M3 3L12 5L7 12Z', '#9b7428', '#e6b444', .8), dome: p('M4 11V8Q8 2 12 8V11Z', '#8d7538', '#e4bd62') + p('M8 5V11', '#8d7538'), spot2: p('M4 3H12L8 7V11L5 7Z', '#a57b38', '#ddb464', .8)
};

document.querySelectorAll('[data-icons]').forEach(box => {
  box.innerHTML = box.dataset.icons.split(' ').map(name => {
    if (name === '|') return '<span class="gap"></span>';
    const on = name[0] === '*';
    return `<span class="cell${on ? ' on' : ''}"><svg viewBox="0 0 16 16">${icons[on ? name.slice(1) : name]}</svg></span>`;
  }).join('');
});

// Corners of each cube: top-left, top-right, right, front, lower-left, lower-front, lower-right.
const cubes = [
  ['55,59', '168,43', '193,76', '77,92', '75,167', '97,203', '208,184'],
  ['127,168', '249,148', '280,187', '154,209', '147,285', '174,326', '296,304'],
  ['214,303', '348,277', '387,325', '248,352', '233,427', '269,480', '402,453'],
  ['325,470', '474,438', '522,500', '368,535', '343,605', '387,674', '536,637'],
  ['468,687', '635,646', '699,730', '526,774', '485,835', '543,926', '710,880'],
  ['662,983', '852,926', '941,1042', '743,1105', '674,1143', '753,1270', '943,1204']
];
document.getElementById('cubes').innerHTML = cubes.map(([tl, tr, r, f, bl, bf, br]) =>
  `<polygon points="${tl} ${tr} ${r} ${f}" fill="#d4d4d4"/><polygon points="${tl} ${f} ${bf} ${bl}" fill="#b9b9b9"/><polygon points="${f} ${r} ${br} ${bf}" fill="#fff"/>`).join('');
```
